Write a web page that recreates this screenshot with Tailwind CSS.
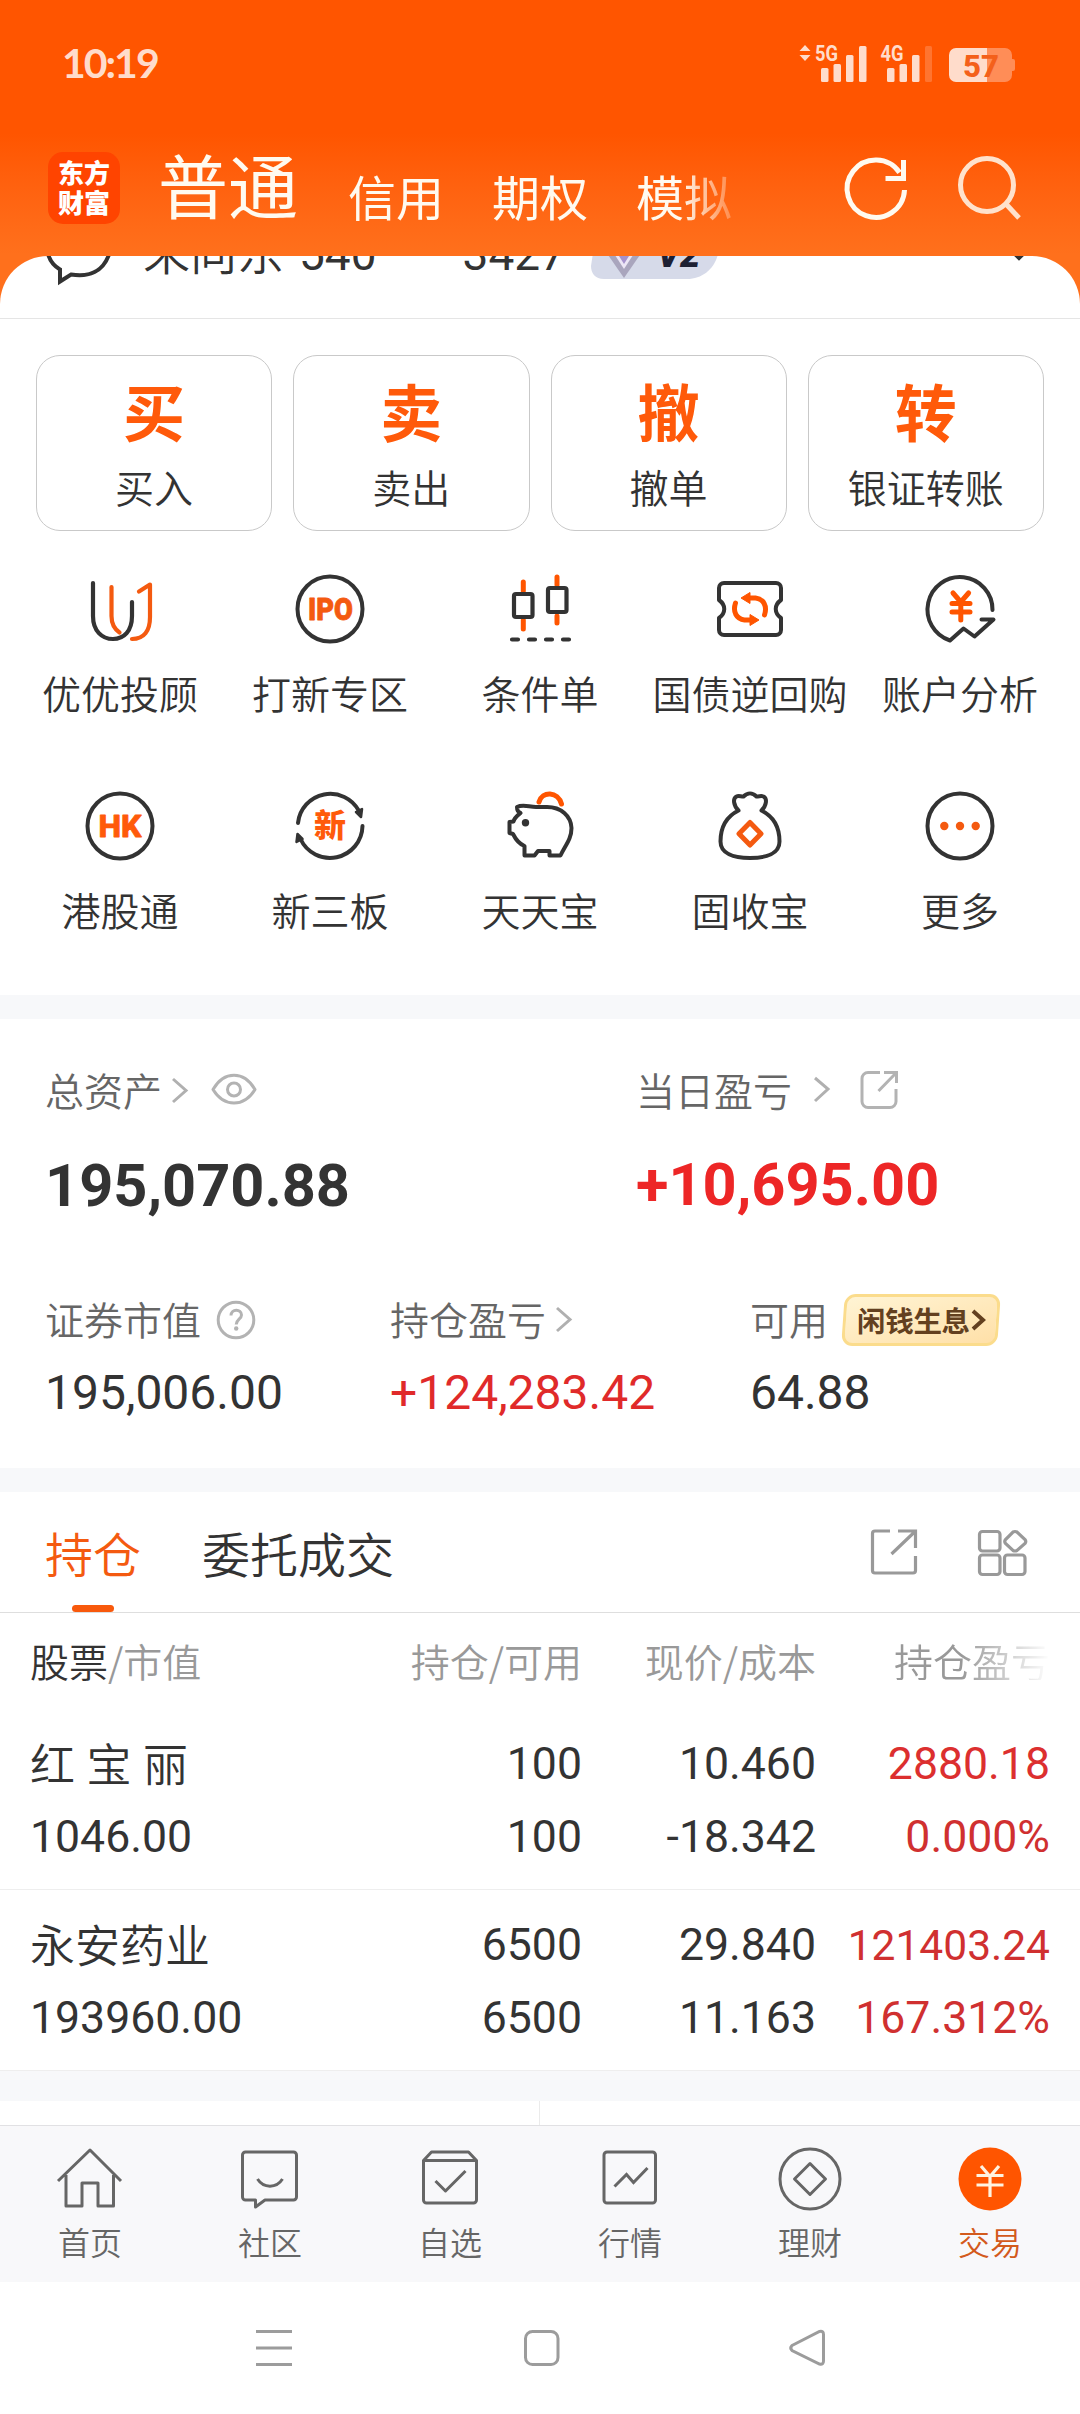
<!DOCTYPE html>
<html lang="zh-CN">
<head>
<meta charset="utf-8">
<title>交易</title>
<script src="https://cdn.jsdelivr.net/npm/@tailwindcss/browser@4"></script>
</head>
<body class="bg-white">
<div class="flex h-[2414px] w-[1080px] flex-col overflow-hidden bg-white font-['Noto_Sans_CJK_SC',sans-serif] text-[39px] leading-[40px] text-[#333]">

  <!-- Header -->
  <div class="flex h-[318px] shrink-0 flex-col bg-linear-to-b from-[#ff5500] from-42% to-[#ff701c] to-80%">
    <div class="flex h-[128px] shrink-0 items-center justify-between pr-[64px] pl-[62px] text-[#ffdccb]">
      <span class="mb-[2px] font-[Lato] text-[41px] font-bold tracking-[-2px]">10:19</span>
      <svg class="h-[40px] w-[217px]" viewBox="799 44 217 40" fill="#ffdccb">
        <path d="M805 45l5.5 6h-11zM805 61l5.5-6h-11z"/>
        <text x="815" y="61" font-family="Roboto" font-weight="700" font-size="22" textLength="23" lengthAdjust="spacingAndGlyphs">5G</text>
        <rect x="821" y="68" width="7.5" height="14" rx="1.5"/><rect x="833.5" y="64" width="7.5" height="18" rx="1.5"/><rect x="846" y="55" width="7.5" height="27" rx="1.5"/><rect x="859" y="46" width="7.5" height="36" rx="1.5"/>
        <text x="880.5" y="61" font-family="Roboto" font-weight="700" font-size="22" textLength="23" lengthAdjust="spacingAndGlyphs">4G</text>
        <rect x="887" y="68" width="7.5" height="14" rx="1.5"/><rect x="899.5" y="64" width="7.5" height="18" rx="1.5"/><rect x="912" y="55" width="7.5" height="27" rx="1.5"/><rect x="925" y="46" width="7" height="36" rx="1.5" fill="#ff7430"/>
        <path d="M987 48h18a7 7 0 0 1 7 7v4h1a2 2 0 0 1 2 2v8a2 2 0 0 1-2 2h-1v4a7 7 0 0 1-7 7h-18z" fill="#ff8d57"/>
        <path d="M956 48h31v34h-31a7 7 0 0 1-7-7v-20a7 7 0 0 1 7-7z"/>
        <text x="963" y="77" font-family="Roboto" font-weight="800" font-size="31" fill="#f4601a" textLength="36" lengthAdjust="spacingAndGlyphs">57</text>
      </svg>
    </div>
    <div class="flex h-[128px] shrink-0 items-center pb-[16px] pl-[48px] text-[#fffaf0]">
      <div class="mt-[8px] flex h-[72px] w-[72px] flex-col items-center justify-center rounded-[15px] bg-[#ff4400] pb-[2px] text-[26px] leading-[30px] font-black text-white"><span>东方</span><span>财富</span></div>
      <span class="ml-[38px] text-[70px] leading-[80px]">普通</span>
      <div class="mt-[22px] ml-[50px] flex w-[386px] gap-[48px] text-[48px] leading-[60px] whitespace-nowrap mask-r-from-86% mask-r-to-104%"><span>信用</span><span>期权</span><span>模拟</span></div>
      <svg class="mt-[8px] ml-[106px] h-[72px] w-[190px]" viewBox="840 152 190 72" fill="none" stroke-width="5">
        <path d="M904.500 190a28.700 28.700 0 1 1-5-17.500M903.500 160v18.500h-18" stroke="#fffaf0"/>
        <g stroke="#ffe2cc"><circle cx="987" cy="185" r="26.500"/><path d="M1006 204l13 14"/></g>
      </svg>
    </div>
    <!-- Account row, scrolled partly under the header -->
    <div class="flex h-[62px] shrink-0 overflow-hidden rounded-t-[48px] bg-white">
      <svg class="ml-[40px] h-[62px] w-[76px] shrink-0" viewBox="40 256 76 62" fill="none" stroke="#333" stroke-width="4"><path d="M48 254c2 7 6 12 12 15.500v12l11-7c18 3 32-3 38-20"/></svg>
      <div class="mt-[-34px] ml-[27px] flex h-[56px] shrink-0 items-baseline text-[47px] leading-[56px] font-[350]"><span>朱向东</span><span class="ml-[15px] font-[Roboto] text-[46px] font-normal">540</span><span class="ml-[86px] font-[Roboto] text-[46px] font-normal">3427</span></div>
      <svg class="ml-[24px] h-[24px] w-[130px] shrink-0" viewBox="588 256 130 24"><path d="M593 240h124c2 22-12 39-32 39h-83c-9 0-13-6-13-13z" fill="#d6dae9"/><path d="M604 252l18 26 18-26z" fill="#a9a5bd"/><path d="M611 252l11 17 11-17z" fill="#ece6f5"/><path d="M617 256h10l-5 8z" fill="#a692cc"/><text x="655" y="267" font-family="Roboto" font-size="36" font-weight="900" font-style="italic" fill="#1d2033" textLength="43" lengthAdjust="spacingAndGlyphs">V2</text></svg>
      <svg class="ml-[284px] h-[8px] w-[30px] shrink-0" viewBox="1002 256 30 8" fill="none" stroke="#333" stroke-width="4"><path d="M1007 248l10 10 10-10"/></svg>
    </div>
  </div>

  <!-- Trade buttons -->
  <div class="grid h-[212px] shrink-0 grid-cols-4 gap-[21px] border-t border-[#e5e5e5] px-[36px] pt-[36px]">
    <div class="flex h-[176px] flex-col items-center rounded-[24px] border border-[#c9c9c9]"><b class="mt-[16px] text-[62px] leading-[76px] font-bold text-[#ff5a0a]">买</b><span class="mt-[18px] font-[350]">买入</span></div>
    <div class="flex h-[176px] flex-col items-center rounded-[24px] border border-[#c9c9c9]"><b class="mt-[16px] text-[62px] leading-[76px] font-bold text-[#ff5a0a]">卖</b><span class="mt-[18px] font-[350]">卖出</span></div>
    <div class="flex h-[176px] flex-col items-center rounded-[24px] border border-[#c9c9c9]"><b class="mt-[16px] text-[62px] leading-[76px] font-bold text-[#ff5a0a]">撤</b><span class="mt-[18px] font-[350]">撤单</span></div>
    <div class="flex h-[176px] flex-col items-center rounded-[24px] border border-[#c9c9c9]"><b class="mt-[16px] text-[62px] leading-[76px] font-bold text-[#ff5a0a]">转</b><span class="mt-[18px] font-[350]">银证转账</span></div>
  </div>

  <!-- Feature grid -->
  <div class="grid h-[465px] shrink-0 auto-rows-[217px] grid-cols-5 px-[15px] pt-[39px] font-[350] whitespace-nowrap">
    <div class="flex flex-col items-center gap-[23px]">
      <svg class="h-[80px] w-[80px]" viewBox="0 0 80 80" fill="none" stroke-width="4.200" stroke-linecap="round" stroke-linejoin="round"><path d="M13 14v33c0 15 9 23 20 23s19-8 19-23V33" stroke="#333"/><path d="M31.500 18v29c0 8 3 13 8 16.500M52 70c12 0 18-8 18-22V15.500l-11 7" stroke="#f45a10"/></svg>
      <span>优优投顾</span></div>
    <div class="flex flex-col items-center gap-[23px]">
      <svg class="h-[80px] w-[80px]" viewBox="0 0 80 80"><circle cx="40" cy="40" r="32.500" fill="none" stroke="#333" stroke-width="4"/><text x="18" y="51" font-family="Roboto" font-weight="900" font-size="31" fill="#f45a10" stroke="#f45a10" stroke-width=".8" stroke-linejoin="round" textLength="45" lengthAdjust="spacingAndGlyphs">IPO</text></svg>
      <span>打新专区</span></div>
    <div class="flex flex-col items-center gap-[23px]">
      <svg class="h-[80px] w-[80px]" viewBox="0 0 80 80" fill="none" stroke-width="4.200" stroke-linecap="round"><path d="M23.300 13v9M23.300 51v9M57 8v8M57 47v7" stroke="#ff5500" stroke-width="5"/><g stroke="#333"><rect x="14" y="25" width="18.500" height="23" rx="2"/><rect x="48" y="19" width="18.500" height="24" rx="2"/><path d="M12 70.500h6M29 70.500h6M46 70.500h6M63 70.500h6"/></g></svg>
      <span>条件单</span></div>
    <div class="flex flex-col items-center gap-[23px]">
      <svg class="h-[80px] w-[80px]" viewBox="0 0 80 80" fill="none" stroke-linejoin="round"><path d="M14 14h52a5 5 0 0 1 5 5v12c-7 5-7 13 0 18v12a5 5 0 0 1-5 5H14a5 5 0 0 1-5-5V49c7-5 7-13 0-18V19a5 5 0 0 1 5-5z" stroke="#333" stroke-width="4"/><g stroke="#ff5500" stroke-width="5" stroke-linecap="round"><path d="M54.500 46c3-9-1-16-9-17H38M25.500 34c-3 9 1 16 9 17H42"/></g><path d="M31 29l9-5.500v11zM49 51l-9-5.500v11z" fill="#ff5500" stroke="#ff5500"/></svg>
      <span>国债逆回购</span></div>
    <div class="flex flex-col items-center gap-[23px]">
      <svg class="h-[80px] w-[80px]" viewBox="0 0 80 80" fill="none" stroke-width="4" stroke-linecap="round" stroke-linejoin="round"><path d="M72.500 41A32.500 32.500 0 1 0 30 71.500L43.500 59.500 54.500 67.500 73.500 50.500H61.500" stroke="#333"/><path d="M33 24l7.800 9 7.800-9M32 34.500h18M32 43h18M40.800 34v17" stroke="#ff5500" stroke-width="5"/></svg>
      <span>账户分析</span></div>
    <div class="flex flex-col items-center gap-[23px]">
      <svg class="h-[80px] w-[80px]" viewBox="0 0 80 80"><circle cx="40" cy="40" r="32.500" fill="none" stroke="#333" stroke-width="4"/><text x="18.500" y="51" font-family="Roboto" font-weight="800" font-size="31" fill="#ff5a0a" stroke="#ff5a0a" stroke-width=".8" stroke-linejoin="round" textLength="43" lengthAdjust="spacingAndGlyphs">HK</text></svg>
      <span>港股通</span></div>
    <div class="flex flex-col items-center gap-[23px]">
      <svg class="h-[80px] w-[80px]" viewBox="0 0 80 80" fill="none" stroke="#333" stroke-width="4" stroke-linecap="round"><path d="M8 37a32.500 32.500 0 0 1 61-12M72.500 40a32.500 32.500 0 0 1-62 13"/><path d="M66 26l6-3-1 8zM7.500 48l5 5-6 3z" fill="#333" stroke-width="2.500" stroke-linejoin="round"/><text x="40" y="51" text-anchor="middle" font-family="Noto Sans CJK SC" font-weight="900" font-size="32" fill="#ff5a0a" stroke="none">新</text></svg>
      <span>新三板</span></div>
    <div class="flex flex-col items-center gap-[23px]">
      <svg class="h-[80px] w-[80px]" viewBox="0 0 80 80" fill="none" stroke-width="4" stroke-linejoin="round" stroke-linecap="round"><path d="M39 16c3-11 19-11 22.500 2" stroke="#ff5500" stroke-width="5"/><path d="M17 21c6-3 12 0 19 0h11c14 0 24 9 24.500 21 0 11-6 17-11 27.500H49.500V65H38l-3.500 4.500h-10V60c-5-2-9-7-11.500-12L9.500 47V36l4-.500c1-4 4-6 7-8.500-3-1-3.500-3-3.500-6z" stroke="#333"/><circle cx="25.500" cy="36.700" r="3.700" fill="#333"/></svg>
      <span>天天宝</span></div>
    <div class="flex flex-col items-center gap-[23px]">
      <svg class="h-[80px] w-[80px]" viewBox="0 0 80 80" fill="none" stroke-width="4" stroke-linejoin="round" stroke-linecap="round"><path d="M28.500 24.500c-5-5-6-12-2-14 2-1 4 0 7 0 4-4 9-4 13 0 3 0 5-1 7 0 4 2 3 9-2 14 12 6 18 16 18 31 0 12-13 16.500-29.500 16.500S10.500 67.500 10.500 55.500c0-15 6-25 18-31z" stroke="#333"/><path d="M40 36.500L51 47.700 40 59 29 47.700z" stroke="#f45a10" stroke-width="5"/></svg>
      <span>固收宝</span></div>
    <div class="flex flex-col items-center gap-[23px]">
      <svg class="h-[80px] w-[80px]" viewBox="0 0 80 80"><circle cx="40" cy="40" r="32.500" fill="none" stroke="#333" stroke-width="4"/><g fill="#f45a10"><circle cx="24.300" cy="40" r="4.200"/><circle cx="40" cy="40" r="4.200"/><circle cx="55.700" cy="40" r="4.200"/></g></svg>
      <span>更多</span></div>
  </div>

  <!-- Assets -->
  <div class="flex h-[497px] shrink-0 flex-col border-y-[24px] border-[#f7f8fa] pt-[50px] pl-[45px]">
    <div class="flex h-[40px] items-center font-[350] text-[#666]">
      <div class="flex w-[591px] items-center"><span>总资产</span>
        <svg class="mt-[2px] ml-[8px] h-[28px] w-[20px]" viewBox="0 0 20 28" fill="none" stroke="#b0b0b0" stroke-width="3"><path d="M3 3l13 11.500L3 26"/></svg>
        <svg class="mt-[2px] ml-[20px] h-[36px] w-[48px]" viewBox="0 0 48 36" fill="none" stroke="#b3b3b3" stroke-width="3"><path d="M3 17.500c11-19 31-19 42 0-11 18-31 18-42 0z" stroke-linejoin="round"/><circle cx="24" cy="17.500" r="6.500"/></svg></div>
      <div class="flex items-center"><span>当日盈亏</span>
        <svg class="mt-[2px] ml-[20px] h-[28px] w-[20px]" viewBox="0 0 20 28" fill="none" stroke="#b0b0b0" stroke-width="3"><path d="M3 2l13 11L3 25"/></svg>
        <svg class="mt-[2px] ml-[28px] h-[40px] w-[40px]" viewBox="0 0 40 40" fill="none" stroke="#b3b3b3" stroke-width="3"><path d="M20 2.500H8a6 6 0 0 0-6 6v23a6 6 0 0 0 6 6h22a6 6 0 0 0 6-6V19M18.500 21L36 3M24 2.500h12.500V13"/></svg></div>
    </div>
    <div class="mt-[43px] flex h-[68px] items-center font-[Roboto] text-[59.500px] leading-[68px] font-bold"><span class="w-[591px]">195,070.88</span><span class="pb-[2px] text-[#ed2626]">+10,695.00</span></div>
    <div class="mt-[72px] flex h-[52px] items-center font-[350] text-[#666]">
      <div class="flex w-[345px] items-center"><span>证券市值</span>
        <svg class="mt-[3px] ml-[15px] h-[40px] w-[40px]" viewBox="0 0 40 40"><circle cx="20" cy="20" r="17.800" fill="none" stroke="#b3b3b3" stroke-width="3"/><path d="M15 15.500c0-7 10.500-7 10.500-.500 0 4-5.300 4.500-5.300 9.500" fill="none" stroke="#b3b3b3" stroke-width="3"/><circle cx="20.200" cy="28.500" r="2.200" fill="#b3b3b3"/></svg></div>
      <div class="flex w-[360px] items-center"><span>持仓盈亏</span>
        <svg class="mt-[2px] ml-[8px] h-[28px] w-[20px]" viewBox="0 0 20 28" fill="none" stroke="#b0b0b0" stroke-width="3"><path d="M3 3l13 11.500L3 26"/></svg></div>
      <div class="flex items-center"><span>可用</span>
        <div class="relative mt-[3px] ml-[14px] flex h-[52px] w-[158px] items-center pl-[15px]">
          <div class="absolute inset-x-[1px] inset-y-0 -skew-x-4 rounded-[11px] border-[3px] border-[#fbdc8c] bg-linear-to-br from-[#fff4d4] to-[#ffe0a8]"></div>
          <span class="relative text-[28.500px] leading-[40px] font-bold tracking-[-0.300px] text-[#63401f]">闲钱生息</span>
          <svg class="relative ml-[1px] h-[24px] w-[15px]" viewBox="0 0 15 24" fill="none" stroke="#63401f" stroke-width="4"><path d="M2 3l10 9L2 21"/></svg>
        </div></div>
    </div>
    <div class="mt-[21px] flex h-[56px] items-center font-[Roboto] text-[48px] leading-[56px]"><span class="w-[345px]">195,006.00</span><span class="w-[360px] text-[#e02a2a]">+124,283.42</span><span>64.88</span></div>
  </div>

  <!-- Tabs -->
  <div class="flex h-[121px] shrink-0 items-center border-b border-[#dedede] pl-[45px] text-[48px] leading-[118px]">
    <span class="relative font-[350] text-[#f45a10]">持仓<i class="absolute bottom-[-1px] left-[27px] h-[7px] w-[42px] rounded-full bg-[#f8590c]"></i></span>
    <span class="ml-[61px] font-[350]">委托成交</span>
    <svg class="ml-[474px] h-[52px] w-[164px]" viewBox="868 1526 164 52" fill="none" stroke="#999" stroke-width="3.200"><path d="M890 1531h-15a2.500 2.500 0 0 0-2.500 2.500v37a2.500 2.500 0 0 0 2.500 2.500h38a2.500 2.500 0 0 0 2.500-2.500V1556M891.500 1554l23-22M898 1531h17.500v17"/><rect x="979.500" y="1531.500" width="20.500" height="19.500" rx="3"/><rect x="979.500" y="1555" width="20.500" height="19.500" rx="3"/><rect x="1004.500" y="1555" width="20.500" height="19.500" rx="3"/><path d="M1013 1532q2-1 4 0l8 7.500q1.500 2 0 4l-8 7q-2 1-4 0l-7.500-7q-1.500-2 0-4z"/></svg>
  </div>

  <!-- Holdings -->
  <div class="grid h-[96px] shrink-0 grid-cols-[260px_292px_234px_234px] items-center pb-[3px] pl-[30px] text-right font-[350] text-[#999]">
    <span class="text-left whitespace-nowrap"><span class="text-[#333]">股票</span>/市值</span><span>持仓/可用</span><span>现价/成本</span><span class="mask-r-from-62% mask-r-to-100%">持仓盈亏</span>
  </div>
  <div class="grid h-[181px] shrink-0 grid-cols-[260px_292px_234px_234px] grid-rows-[73px_73px] border-b border-[#eee] pt-[19px] pl-[30px] text-right font-[Roboto] text-[44.600px] leading-[73px]">
    <span class="text-left font-['Noto_Sans_CJK_SC'] text-[45px] leading-[70px] font-[350] [word-spacing:1.500px]">红 宝 丽</span><span>100</span><span>10.460</span><span class="text-[#dc2f2f]">2880.18</span>
    <span class="text-left">1046.00</span><span>100</span><span>-18.342</span><span class="text-[#d03030]">0.000%</span>
  </div>
  <div class="grid h-[181px] shrink-0 grid-cols-[260px_292px_234px_234px] grid-rows-[73px_73px] border-b border-[#eee] pt-[19px] pl-[30px] text-right font-[Roboto] text-[44.600px] leading-[73px]">
    <span class="text-left font-['Noto_Sans_CJK_SC'] text-[45px] leading-[70px] font-[350]">永安药业</span><span>6500</span><span>29.840</span><span class="text-[42.500px] text-[#d03030]">121403.24</span>
    <span class="text-left">193960.00</span><span>6500</span><span>11.163</span><span class="text-[#d03030]">167.312%</span>
  </div>
  <div class="h-[30px] shrink-0 bg-[#f7f8fa]"></div>
  <div class="flex h-[24px] shrink-0"><div class="w-[540px] border-r border-[#ebebeb]"></div></div>

  <!-- Bottom navigation -->
  <div class="grid h-[157px] shrink-0 grid-cols-6 border-t border-[#e1e1e4] bg-[#f8f8fa] pt-[18px] text-[32px] leading-[40px] font-[350] text-[#666]">
    <div class="flex flex-col items-center gap-[7px]"><svg class="h-[70px] w-[70px]" viewBox="0 0 70 70" fill="none" stroke="#666" stroke-width="3"><path d="M3 37L35 6l31 31M11 31v31h16V39h16v23h15.500V31" stroke-linejoin="round"/></svg><span>首页</span></div>
    <div class="flex flex-col items-center gap-[7px]"><svg class="h-[70px] w-[70px]" viewBox="0 0 70 70" fill="none" stroke="#666" stroke-width="3" stroke-linejoin="round"><path d="M10.500 8h48a3 3 0 0 1 3 3v42a3 3 0 0 1-3 3H30l-9.500 7v-7h-10a3 3 0 0 1-3-3V11a3 3 0 0 1 3-3z"/><path d="M22.500 35c6 9.500 19 9.500 25 0"/></svg><span>社区</span></div>
    <div class="flex flex-col items-center gap-[7px]"><svg class="h-[70px] w-[70px]" viewBox="0 0 70 70" fill="none" stroke="#666" stroke-width="3" stroke-linejoin="round"><path d="M8.500 16.500l8-8.500h37l8 8.500V56a3 3 0 0 1-3 3h-47a3 3 0 0 1-3-3zM8.500 16.500h53M20.500 37l10 10 20-20"/></svg><span>自选</span></div>
    <div class="flex flex-col items-center gap-[7px]"><svg class="h-[70px] w-[70px]" viewBox="0 0 70 70" fill="none" stroke="#666" stroke-width="3"><rect x="9" y="8" width="51.500" height="51" rx="3"/><path d="M19.500 42.500L31.500 30.500l7 8 14-14.500"/></svg><span>行情</span></div>
    <div class="flex flex-col items-center gap-[7px]"><svg class="h-[70px] w-[70px]" viewBox="0 0 70 70" fill="none" stroke="#666" stroke-width="3" stroke-linejoin="round"><circle cx="35" cy="35" r="30"/><path d="M35 19.500L50.500 35 35 50.500 19.500 35z"/></svg><span>理财</span></div>
    <div class="flex flex-col items-center gap-[7px] text-[#d35a1c]"><svg class="h-[70px] w-[70px]" viewBox="0 0 70 70" fill="none" stroke="#fff3e0" stroke-width="3.200"><circle cx="35" cy="35" r="31.500" fill="#ff5500" stroke="none"/><path d="M26 22l9 10.500L44 22M21.500 31.500h27M21.500 41h27M35 31.500V53"/></svg><span>交易</span></div>
  </div>

  <!-- System navigation -->
  <div class="flex h-[132px] shrink-0 items-center pl-[254px]">
    <svg class="h-[40px] w-[574px]" viewBox="254 2328 574 40" fill="none" stroke="#9c9c9c" stroke-width="3"><path d="M256 2331.500h36M256 2348h36M256 2364.500h36"/><rect x="525.500" y="2331.500" width="32.500" height="33" rx="7"/><path d="M792 2345.500L819.500 2331.500q4-1 4 3V2361q0 4-4 3L792 2350.500q-2.500-2.500 0-5z"/></svg>
  </div>
</div>
</body>
</html>
